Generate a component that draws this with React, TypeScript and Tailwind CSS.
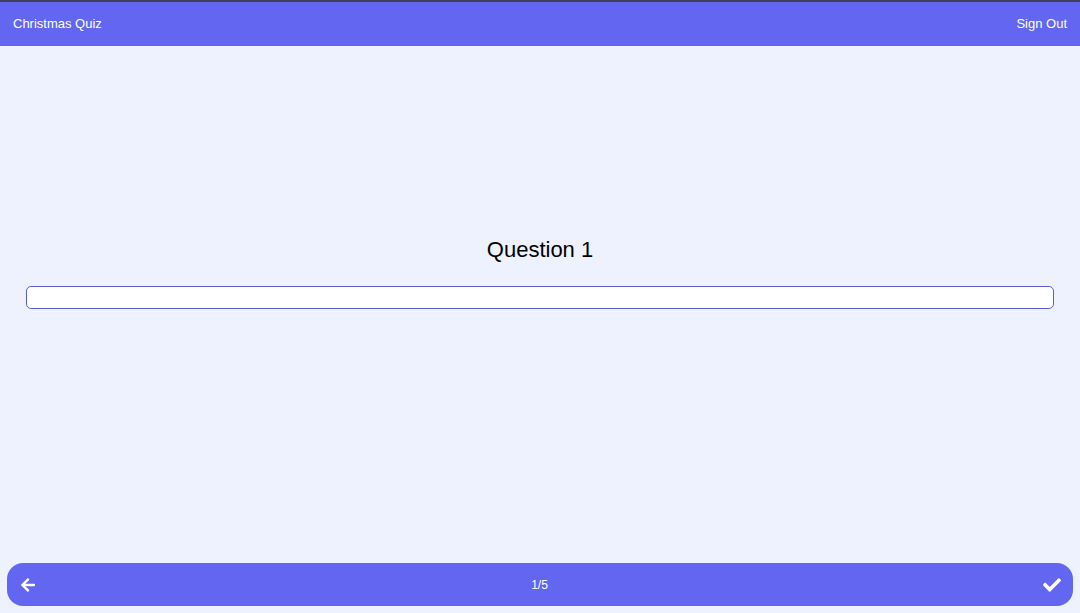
import { FaArrowLeft, FaCheck } from "react-icons/fa";

export default function App() {
  return (
    <div className="h-[613px] w-full flex flex-col bg-[#eef2ff] font-['Liberation_Sans',sans-serif] overflow-hidden">
      {/* Header */}
      <header className="border-t-2 border-[#3f4257] bg-[#6366f1] h-[46px] shrink-0 flex items-center justify-between px-[13px] text-white text-[13px]">
        <span>Christmas Quiz</span>
        <button className="text-white">Sign Out</button>
      </header>

      {/* Question */}
      <main className="flex-1 flex flex-col items-center justify-center px-[26px] pb-[68px]">
        <h1 className="text-[22px] text-black mb-[20px]">Question 1</h1>
        <input
          type="text"
          className="w-full h-[23px] bg-white border border-[#5b5bd6] rounded-[5px] px-2 outline-none"
        />
      </main>

      {/* Footer nav */}
      <footer className="shrink-0 px-[7px] pb-[7px]">
        <div className="h-[43px] bg-[#6366f1] rounded-[16px] flex items-center justify-between pl-[13px] pr-[12px] text-white">
          <button className="text-white">
            <FaArrowLeft className="w-[16px] h-[16px]" />
          </button>
          <span className="text-[12px]">1/5</span>
          <button className="text-white">
            <FaCheck className="w-[18px] h-[18px]" />
          </button>
        </div>
      </footer>
    </div>
  );
}
